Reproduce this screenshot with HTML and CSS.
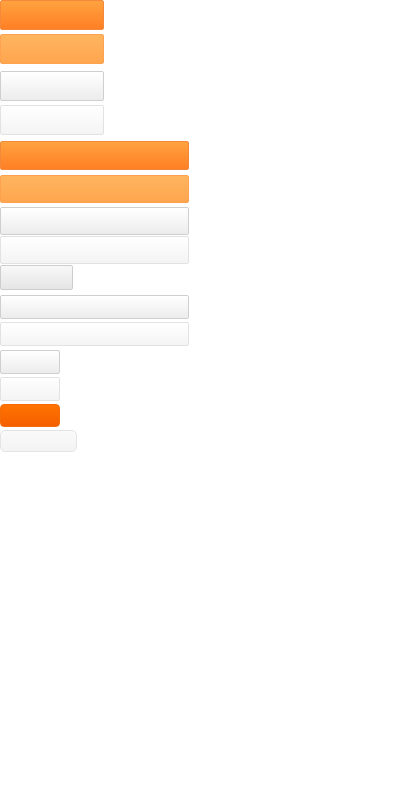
FILE: index.html
```html
<!DOCTYPE html>
<html>
<head>
<meta charset="utf-8">
<link rel="stylesheet" href="styles.css">
</head>
<body>
<div class="stack">
  <button class="btn orange w104 h30"></button>
  <button class="btn orange-light w104 h30 mt4"></button>
  <button class="btn gray w104 h30 mt7"></button>
  <button class="btn gray-light w104 h30 mt4"></button>
  <button class="btn orange w189 h29 mt6"></button>
  <button class="btn orange-light w189 h28 mt5"></button>
  <button class="btn gray w189 h28 mt4"></button>
  <button class="btn gray-light w189 h28 mt1"></button>
  <button class="btn gray-dark w73 h25 mt1"></button>
  <button class="btn gray w189 h24 mt5"></button>
  <button class="btn gray-light w189 h24 mt3"></button>
  <button class="btn gray w60 h24 mt4"></button>
  <button class="btn gray-light w60 h24 mt3"></button>
  <button class="btn solid-orange w60 h23 mt3"></button>
  <button class="btn pill w77 h22 mt3"></button>
</div>
</body>
</html>
```

FILE: styles.css
```css
html, body {
  margin: 0;
  padding: 0;
  background: #ffffff;
  font-family: "Liberation Sans", Arial, sans-serif;
}
.stack {
  display: flex;
  flex-direction: column;
  align-items: flex-start;
}
.btn {
  display: block;
  box-sizing: border-box;
  padding: 0;
  margin: 0;
  border: 1px solid #c9c9c9;
  border-radius: 2px;
  background: #fff;
}
.orange {
  border-color: #f5893a;
  background: linear-gradient(#ffa240, #ff7f24);
}
.orange-light {
  border-color: #ffa250;
  background: linear-gradient(#ffb55f, #ffa54f);
}
.gray {
  border-color: #cfcfcf;
  background: linear-gradient(#ffffff, #ececec);
}
.gray-light {
  border-color: #e2e2e2;
  background: linear-gradient(#ffffff, #f4f4f4);
}
.gray-dark {
  border-color: #cdcdcd;
  background: linear-gradient(#f8f8f8, #e5e5e5);
}
.solid-orange {
  border-color: #f56b05;
  border-radius: 4px;
  background: linear-gradient(#ff7300, #f45f00);
}
.pill {
  border-color: #e4e4e4;
  border-radius: 5px;
  background: linear-gradient(#fafafa, #f3f3f3);
}
.w104 { width: 104px; }
.w189 { width: 189px; }
.w73 { width: 73px; }
.w60 { width: 60px; }
.w77 { width: 77px; }
.h30 { height: 30px; }
.h29 { height: 29px; }
.h28 { height: 28px; }
.h25 { height: 25px; }
.h24 { height: 24px; }
.h23 { height: 23px; }
.h22 { height: 22px; }
.mt1 { margin-top: 1px; }
.mt3 { margin-top: 3px; }
.mt4 { margin-top: 4px; }
.mt5 { margin-top: 5px; }
.mt6 { margin-top: 6px; }
.mt7 { margin-top: 7px; }
```
